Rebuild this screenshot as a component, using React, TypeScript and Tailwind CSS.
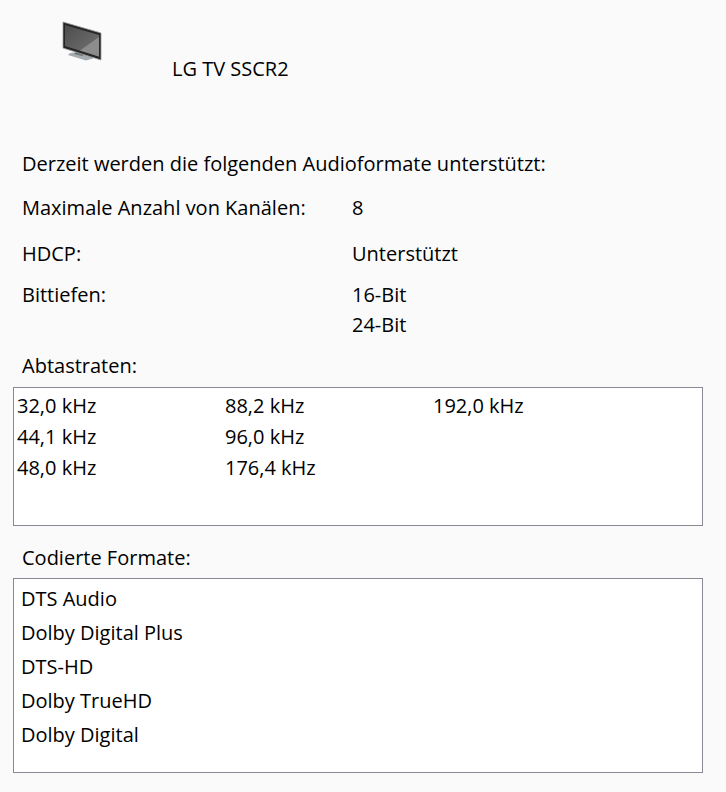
const sampleRates = [
  ["32,0 kHz", "88,2 kHz", "192,0 kHz"],
  ["44,1 kHz", "96,0 kHz", ""],
  ["48,0 kHz", "176,4 kHz", ""],
];

const codecs = ["DTS Audio", "Dolby Digital Plus", "DTS-HD", "Dolby TrueHD", "Dolby Digital"];

function TvIcon() {
  return (
    <svg width="40" height="40" viewBox="0 0 40 40" className="block">
      <defs>
        <linearGradient id="tv-screen" x1="0" y1="0" x2="1" y2="1">
          <stop offset="0" stopColor="#4c4c4c" />
          <stop offset="1" stopColor="#767676" />
        </linearGradient>
      </defs>
      <path d="M8 32 L17 31 L31 35 L31 37.5 L24 39.5 L6 34 Z" fill="#a4acb1" />
      <path d="M14 31 L23 33 L20 35 L12 33 Z" fill="#6f7477" />
      <path d="M1 1 L39 12 L39 39 L1 27 Z" fill="#262626" stroke="#9a9a9a" strokeWidth="0.8" />
      <path d="M3 4 L37 14 L37 35.5 L3 25 Z" fill="url(#tv-screen)" />
      <path d="M18 29.5 L37 16 L37 35.5 Z" fill="#8c8c8c" />
    </svg>
  );
}

export default function App() {
  return (
    <div className="h-[792px] w-[726px] overflow-hidden bg-[#fafafa] font-['Open_Sans','Noto_Sans',sans-serif] text-[20px] leading-[30px] text-black">
      <div className="flex h-[149px] pl-[62px] pt-[21px]">
        <TvIcon />
        <div className="ml-[70px] mt-[33px]">LG TV SSCR2</div>
      </div>

      <div className="pl-[22px]">
        <p>Derzeit werden die folgenden Audioformate unterstützt:</p>
        <div className="mt-[14px] flex">
          <span className="w-[330px]">Maximale Anzahl von Kanälen:</span>
          <span>8</span>
        </div>
        <div className="mt-[16px] flex">
          <span className="w-[330px]">HDCP:</span>
          <span>Unterstützt</span>
        </div>
        <div className="mt-[11px] flex">
          <span className="w-[330px]">Bittiefen:</span>
          <div>
            <div>16-Bit</div>
            <div>24-Bit</div>
          </div>
        </div>
        <p className="mt-[11px]">Abtastraten:</p>
      </div>

      <div className="ml-[13px] mr-[23px] mt-[6px] h-[139px] border border-[#8a8a96] bg-white pl-[3px] pt-[2px]">
        {sampleRates.map((row) => (
          <div className="flex h-[31px] items-center" key={row[0]}>
            <span className="w-[208px]">{row[0]}</span>
            <span className="w-[208px]">{row[1]}</span>
            <span>{row[2]}</span>
          </div>
        ))}
      </div>

      <p className="mt-[17px] pl-[22px]">Codierte Formate:</p>

      <div className="ml-[13px] mr-[23px] mt-[5px] h-[195px] border border-[#8a8a96] bg-white pl-[7px] pt-[3px]">
        {codecs.map((name) => (
          <div className="flex h-[34px] items-center" key={name}>
            {name}
          </div>
        ))}
      </div>
    </div>
  );
}
